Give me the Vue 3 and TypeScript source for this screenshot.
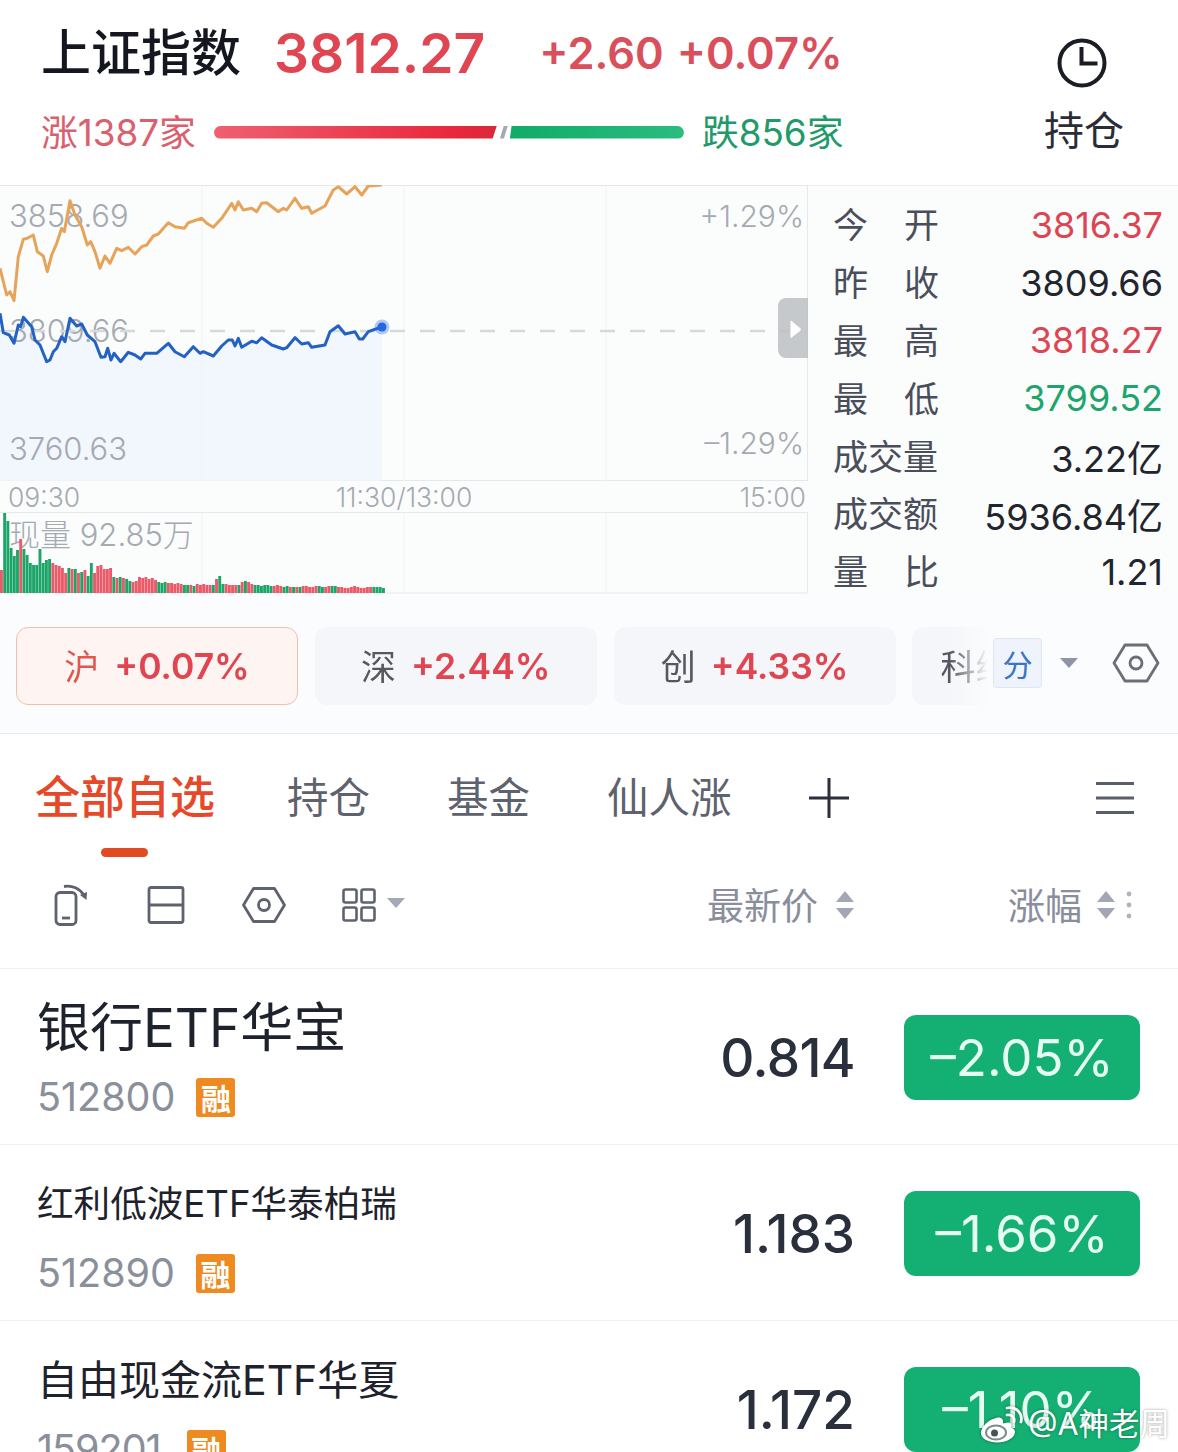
<script setup lang="ts">
const toPts = (raw: number[][]) =>
  raw.map(([x, y]) => `${(x / 3).toFixed(1)},${(y / 3 - 5).toFixed(1)}`).join(' ')

const orangeRaw = [[0,265],[20,345],[30,335],[42,362],[55,230],[70,178],[82,175],[100,165],[112,215],[130,228],[142,275],[155,225],[170,190],[185,145],[193,155],[210,62],[225,105],[245,140],[262,195],[272,185],[285,215],[300,265],[315,228],[330,250],[350,205],[365,212],[385,202],[405,222],[425,200],[440,195],[460,168],[475,162],[505,128],[525,140],[553,145],[565,128],[605,115],[620,130],[640,142],[665,115],[695,70],[705,90],[715,65],[730,90],[755,85],[770,95],[785,70],[800,68],[835,95],[850,85],[860,90],[885,55],[905,85],[925,80],[935,100],[975,78],[1000,30],[1015,20],[1040,42],[1065,20],[1085,45],[1105,18],[1145,15]]
const blueRaw = [[0,400],[10,458],[28,465],[42,490],[55,435],[62,440],[70,412],[95,440],[105,480],[120,495],[140,545],[150,540],[160,515],[170,505],[185,470],[195,485],[210,415],[230,438],[245,432],[262,465],[285,485],[303,532],[315,530],[323,505],[333,540],[342,520],[362,545],[385,517],[405,525],[422,537],[435,520],[470,520],[505,490],[525,515],[553,530],[580,500],[600,520],[610,515],[640,528],[665,498],[685,480],[697,480],[705,498],[715,475],[725,502],[755,484],[770,488],[785,473],[815,495],[850,507],[860,503],[885,473],[905,492],[925,488],[935,502],[975,495],[990,455],[1015,437],[1035,462],[1065,455],[1078,477],[1088,477],[1105,455],[1145,441]]

const orange = toPts(orangeRaw)
const blue = toPts(blueRaw)
const blueArea = toPts([...blueRaw, [1145, 902], [0, 902]])

const volHeights = [23,80,72,45,37,43,54,44,38,30,28,28,44,30,33,34,30,28,27,25,20,25,24,24,20,21,23,17,30,20,27,28,24,24,25,16,15,16,15,14,12,11,12,16,15,16,14,15,13,11,10,11,10,10,9,10,9,8,8,8,7,9,8,9,8,8,8,14,17,9,9,8,8,8,8,11,12,11,9,8,8,7,8,8,7,7,8,7,6,7,6,6,6,6,7,7,6,6,7,7,6,6,7,7,7,6,6,5,5,6,7,6,5,5,6,6,6,6,6,5]
const volColors = 'rgggggrgggggggggrrrrrgrgrgrggrrrrrrgrgrggrrrrrrrrgggrrrrrggrgrrrrrgrggrrrrgrgrrggggggrrrggrgrgrrrrrggrrggrrrrrrrrrrr'
const bars = volHeights.map((h, i) => ({
  x: i * 3.21,
  y: 408 - h,
  h,
  fill: volColors[i] === 'r' ? '#ea5a68' : '#1ca568',
}))

const stats = [
  { a: '今', b: '开', v: '3816.37', c: 'up' },
  { a: '昨', b: '收', v: '3809.66', c: '' },
  { a: '最', b: '高', v: '3818.27', c: 'up' },
  { a: '最', b: '低', v: '3799.52', c: 'down' },
  { a: '成交量', b: '', v: '3.22亿', c: '' },
  { a: '成交额', b: '', v: '5936.84亿', c: '' },
  { a: '量', b: '比', v: '1.21', c: '' },
]

const markets = [
  { n: '沪', p: '+0.07%', on: true },
  { n: '深', p: '+2.44%', on: false },
  { n: '创', p: '+4.33%', on: false },
  { n: '科综', p: '+1.02%', on: false },
]

const tabs = ['全部自选', '持仓', '基金', '仙人涨']

const rows = [
  { name: '银行ETF华宝', code: '512800', price: '0.814', pct: '–2.05%', cls: 'row-a' },
  { name: '红利低波ETF华泰柏瑞', code: '512890', price: '1.183', pct: '–1.66%', cls: 'row-b' },
  { name: '自由现金流ETF华夏', code: '159201', price: '1.172', pct: '–1.10%', cls: 'row-c' },
]
</script>

<template>
  <div class="page">
    <header class="head">
      <div class="head-main">
        <div class="quote">
          <span class="name">上证指数</span>
          <span class="last">3812.27</span>
          <span class="chg">+2.60</span>
          <span class="chg">+0.07%</span>
        </div>
        <div class="breadth">
          <span class="up-txt">涨1387家</span>
          <div class="bar">
            <i class="bar-red"></i>
            <i class="bar-flat"></i>
            <i class="bar-green"></i>
          </div>
          <span class="down-txt">跌856家</span>
        </div>
      </div>
      <div class="hold">
        <svg width="52" height="52" viewBox="0 0 52 52" fill="none" stroke="#1b1d26" stroke-width="4">
          <circle cx="26" cy="26" r="22.5" />
          <path d="M25.500 10v16.500h16" />
        </svg>
        <span>持仓</span>
      </div>
    </header>

    <section class="market">
      <svg class="chart" width="808" height="410" viewBox="0 0 808 410">
        <rect x="-1" y="0.5" width="808.500" height="295" fill="none" stroke="#e6e8ea" />
        <rect x="-1" y="327.500" width="808.500" height="80.500" fill="none" stroke="#e6e8ea" />
        <polygon :points="blueArea" fill="#f2f6fd" />
        <g stroke="#f0f2f3">
          <path d="M202 1v295M404 1v295M606 1v295M202 328v80M404 328v80M606 328v80" />
        </g>
        <g class="axis">
          <text x="9" y="42">3858.69</text>
          <text x="9" y="157">3809.66</text>
          <text x="9" y="275">3760.63</text>
          <text class="pct" x="804" y="42" text-anchor="end">+1.29%</text>
          <text class="pct" x="804" y="269" text-anchor="end">–1.29%</text>
          <text class="time" x="8" y="322">09:30</text>
          <text class="time" x="404" y="322" text-anchor="middle">11:30/13:00</text>
          <text class="time" x="806" y="322" text-anchor="end">15:00</text>
          <text class="vol" x="9" y="361">现量 92.85万</text>
        </g>
        <path d="M0 146H790" stroke="#d6d9dc" stroke-width="2.500" stroke-dasharray="15 15" />
        <polyline :points="orange" fill="none" stroke="#e8a35a" stroke-width="3" stroke-linejoin="round" />
        <polyline :points="blue" fill="none" stroke="#2362c4" stroke-width="3" stroke-linejoin="round" />
        <circle cx="382" cy="142" r="7.500" fill="#2468e0" opacity="0.35" />
        <circle cx="382" cy="142" r="4.500" fill="#2468e0" />
        <path d="M808 113h-22a8 8 0 0 0-8 8v44a8 8 0 0 0 8 8h22z" fill="#bcc0c3" opacity="0.85" />
        <path d="M791 136l9 7.500q1 1 0 2l-9 7z" fill="#fff" stroke="#fff" stroke-linejoin="round" />
        <rect v-for="(b, i) in bars" :key="i" :x="b.x" :y="b.y" width="2.900" :height="b.h" :fill="b.fill" />
      </svg>
      <div class="stats">
        <div v-for="(s, i) in stats" :key="i" class="stat">
          <span class="stat-label"><span>{{ s.a }}</span><span v-if="s.b">{{ s.b }}</span></span>
          <span class="stat-val" :class="s.c">{{ s.v }}</span>
        </div>
      </div>
    </section>

    <section class="indexes">
      <div class="index-scroll">
        <div v-for="m in markets" :key="m.n" class="index-card" :class="{ on: m.on }">
          <span class="index-name">{{ m.n }}</span>
          <span class="index-pct">{{ m.p }}</span>
        </div>
      </div>
      <div class="index-tools">
        <span class="fen">分</span>
        <svg width="20" height="12" viewBox="0 0 20 12"><path d="M1 1h18l-9 10z" fill="#8f93a6" /></svg>
        <svg class="hex-top" width="48" height="40" viewBox="0 0 48 40" fill="none" stroke="#6b6e78" stroke-width="2.800">
          <path d="M13 2h22l11 18-11 18H13L2 20z" stroke-linejoin="round" />
          <circle cx="24" cy="20" r="6" />
        </svg>
      </div>
    </section>

    <nav class="tabs">
      <span v-for="(t, i) in tabs" :key="t" class="tab" :class="{ active: i === 0 }">{{ t }}</span>
      <svg width="40" height="40" viewBox="0 0 40 40" stroke="#2b2f3a" stroke-width="3"><path d="M0 20h40M20 0v40" /></svg>
      <svg class="menu" width="38" height="34" viewBox="0 0 38 34" stroke="#5a5e6a" stroke-width="3"><path d="M0 2.500h38M0 17h38M0 31.500h38" /></svg>
    </nav>

    <div class="toolbar">
      <div class="tool-icons">
        <svg width="40" height="44" viewBox="0 0 40 44" fill="none" stroke="#5f636f" stroke-width="2.800">
          <rect x="6" y="9.500" width="20" height="32" rx="4" />
          <path d="M12 35h8" />
          <path d="M14 3.500c8-1.500 16 2 20 9" />
          <path d="M30 12l6.500 5 0.500-8z" fill="#5f636f" stroke="none" />
        </svg>
        <svg width="40" height="38" viewBox="0 0 40 38" fill="none" stroke="#5f636f" stroke-width="2.800">
          <rect x="3" y="1.500" width="34" height="35" rx="2" />
          <path d="M3 19h34" />
        </svg>
        <svg width="44" height="36" viewBox="0 0 44 36" fill="none" stroke="#5f636f" stroke-width="2.800">
          <path d="M11.500 1.500h21L42.500 18l-10 16.500h-21L1.500 18z" stroke-linejoin="round" />
          <circle cx="22" cy="18" r="5.500" />
        </svg>
        <div class="grid-pick">
          <svg width="34" height="34" viewBox="0 0 34 34" fill="none" stroke="#5f636f" stroke-width="2.600">
            <rect x="1.500" y="1.500" width="13" height="13" rx="2" />
            <rect x="19.500" y="1.500" width="13" height="13" rx="2" />
            <rect x="1.500" y="19.500" width="13" height="13" rx="2" />
            <rect x="19.500" y="19.500" width="13" height="13" rx="2" />
          </svg>
          <svg class="caret" width="20" height="12" viewBox="0 0 20 12"><path d="M1 1h18l-9 10z" fill="#a5a8b6" /></svg>
        </div>
      </div>
      <div class="cols">
        <div class="col">
          <span>最新价</span>
          <svg width="20" height="30" viewBox="0 0 20 30" fill="#a3a6b4"><path d="M10 1l9 11H1zM10 29L1 18h18z" /></svg>
        </div>
        <div class="col col-pct">
          <span>涨幅</span>
          <svg width="20" height="30" viewBox="0 0 20 30" fill="#a3a6b4"><path d="M10 1l9 11H1zM10 29L1 18h18z" /></svg>
          <svg class="dots" width="6" height="30" viewBox="0 0 6 30" fill="#b0b3bd"><circle cx="3" cy="4" r="2.400" /><circle cx="3" cy="15" r="2.400" /><circle cx="3" cy="26" r="2.400" /></svg>
        </div>
      </div>
    </div>

    <div v-for="r in rows" :key="r.code" class="row" :class="r.cls">
      <div class="row-left">
        <div class="row-name">{{ r.name }}</div>
        <div class="row-code">
          <span>{{ r.code }}</span>
          <i class="rong">融</i>
        </div>
      </div>
      <div class="row-price">{{ r.price }}</div>
      <div class="row-pill">{{ r.pct }}</div>
    </div>

    <div class="mark">
      <svg width="46" height="38" viewBox="0 0 44 38" fill="none">
        <path d="M16 13C8 15 1 22 1 28c0 6 8 9.500 16 9.500 10 0 18-5 18-10.500 0-3-3-4-4-4.500 1-3 0-5-3-5-2 0-4 1-5 1 1-4-2-7-7-5.500z" fill="#fff" />
        <ellipse cx="16" cy="27.500" rx="10" ry="7" fill="none" stroke="#7d8c86" stroke-width="2" />
        <circle cx="14.500" cy="28" r="3.500" fill="#48544f" />
        <path d="M27 10c4-1 8 2 7 7M27 3c9-2 16 5 14 14" stroke="#fff" stroke-width="2.800" stroke-linecap="round" />
      </svg>
      <span>@A神老周</span>
    </div>
  </div>
</template>

<style scoped>
.page {
  position: relative;
  height: 1452px;
  overflow: hidden;
  background: #fff;
  font-family: Inter, "Noto Sans CJK SC", sans-serif;
  color: #1a1e28;
}
.head {
  display: flex;
  justify-content: space-between;
  height: 185px;
  box-sizing: border-box;
  padding: 20px 54px 0 41px;
}
.quote {
  display: flex;
  align-items: center;
  height: 66px;
}
.name {
  margin-top: -8px;
  font-size: 50px;
  font-weight: 500;
  color: #14171f;
}
.last {
  margin-left: 33px;
  font-size: 55px;
  font-weight: 600;
  color: #e04552;
}
.chg {
  margin-left: 13px;
  font-size: 43.500px;
  font-weight: 600;
  color: #d9505c;
}
.last + .chg {
  margin-left: 54px;
}
.breadth {
  display: flex;
  align-items: center;
  height: 50px;
  margin-top: 21px;
  font-size: 36.800px;
}
.breadth span {
  margin-top: -4px;
}
.up-txt {
  color: #d9606c;
}
.down-txt {
  color: #1f9a68;
}
.bar {
  display: flex;
  width: 470px;
  height: 13px;
  margin: 0 18px;
}
.bar i {
  display: block;
  height: 13px;
}
.bar-red {
  width: 283px;
  border-radius: 7px 0 0 7px;
  background: linear-gradient(90deg, #ee6070, #e8283c 85%, #d9293a);
  clip-path: polygon(0 0, 100% 0, 98.500% 100%, 0 100%);
}
.bar-flat {
  width: 8px;
  margin: 0 2px 0 3px;
  background: #a4a9b3;
  clip-path: polygon(50% 0, 100% 0, 50% 100%, 0 100%);
}
.bar-green {
  flex: 1;
  border-radius: 0 7px 7px 0;
  background: linear-gradient(90deg, #10ac68, #2bbc80);
  clip-path: polygon(1% 0, 100% 0, 100% 100%, 0 100%);
}
.hold {
  display: flex;
  flex-direction: column;
  align-items: center;
  padding-top: 17px;
  font-size: 40px;
  color: #2a2d37;
}
.hold svg {
  margin-right: 4px;
}
.hold span {
  margin-top: 17px;
  line-height: 50px;
}
.market {
  display: flex;
  height: 410px;
  background: #fbfcfc;
  box-shadow: inset 0 1px #eceef0;
}
.chart {
  display: block;
  flex: none;
}
.axis text {
  font-size: 31px;
  font-weight: 300;
  fill: #a5aab2;
}
.axis .pct {
  font-size: 30px;
}
.axis .time {
  font-size: 26.500px;
}
.axis .vol {
  font-size: 31px;
}
.stats {
  flex: 1;
  padding: 11px 15px 0 25px;
  display: grid;
  grid-auto-rows: 57.800px;
}
.stat {
  display: flex;
  align-items: center;
  justify-content: space-between;
}
.stat-label {
  display: flex;
  justify-content: space-between;
  width: 106px;
  margin-top: -4px;
  font-size: 35px;
  white-space: nowrap;
  color: #4a4e5a;
}
.stat-val {
  font-size: 36px;
  color: #22252e;
}
.stat-val.up {
  color: #dd4552;
}
.stat-val.down {
  color: #1ea56c;
}
.indexes {
  display: flex;
  height: 139px;
  box-sizing: border-box;
  padding-top: 32px;
  background: #fbfcfd;
  border-bottom: 1px solid #e9ebee;
}
.index-scroll {
  display: flex;
  gap: 16.800px;
  width: 990px;
  height: 78px;
  padding-left: 16px;
  box-sizing: border-box;
  overflow: hidden;
  -webkit-mask-image: linear-gradient(90deg, #000 950px, transparent 988px);
  mask-image: linear-gradient(90deg, #000 950px, transparent 988px);
}
.index-card {
  flex: none;
  display: flex;
  align-items: center;
  justify-content: center;
  gap: 15px;
  width: 282px;
  height: 78px;
  box-sizing: border-box;
  border-radius: 12px;
  background: #f5f6f9;
  font-size: 35.500px;
}
.index-card:last-child {
  justify-content: flex-start;
  padding-left: 28px;
}
.index-card.on {
  background: #fef4f1;
  border: 1.500px solid #f3bda9;
}
.index-name {
  margin-top: -4px;
  font-size: 35px;
  color: #55585f;
}
.index-card.on .index-name {
  color: #e0574f;
}
.index-pct {
  font-weight: 600;
  color: #e04552;
}
.index-tools {
  display: flex;
  align-items: center;
  height: 72px;
  margin-left: 3px;
}
.fen {
  display: flex;
  align-items: center;
  justify-content: center;
  width: 49px;
  height: 50px;
  box-sizing: border-box;
  border: 1px solid #dde6f5;
  border-radius: 4px;
  background: #eff4fc;
  font-size: 30px;
  color: #3a74c4;
}
.index-tools svg {
  margin-left: 17px;
}
.index-tools .hex-top {
  margin-left: 33px;
}
.tabs {
  display: flex;
  align-items: center;
  gap: 77px;
  height: 124px;
  box-sizing: border-box;
  padding: 34px 44px 30px 35px;
  font-size: 41.500px;
  color: #5e626e;
}
.tab {
  position: relative;
  line-height: 60px;
}
.tab.active {
  margin-right: -5px;
  font-size: 45px;
  font-weight: 500;
  color: #e5492a;
}
.tab.active::after {
  content: "";
  position: absolute;
  left: 66px;
  top: 80px;
  width: 47px;
  height: 9px;
  border-radius: 5px;
  background: #e24a24;
}
.menu {
  margin-left: auto;
}
.toolbar {
  display: flex;
  align-items: center;
  justify-content: space-between;
  height: 110px;
  box-sizing: border-box;
  padding: 0 46px 16px 50px;
}
.tool-icons {
  display: flex;
  align-items: center;
  gap: 56px;
}
.grid-pick {
  display: flex;
  align-items: center;
  gap: 10px;
}
.caret {
  margin-top: -4px;
}
.cols {
  display: flex;
  gap: 153px;
  font-size: 37px;
  color: #8a8e9c;
}
.col {
  display: flex;
  align-items: center;
  gap: 17px;
}
.col span {
  margin-top: -2px;
}
.col-pct {
  gap: 14px;
}
.dots {
  margin-left: -4px;
}
.row {
  display: flex;
  align-items: center;
  height: 176px;
  box-sizing: border-box;
  padding: 0 38px 0 37px;
  border-top: 1px solid #f1f2f4;
}
.row-left {
  flex: 1;
  height: 100%;
  padding-top: 29px;
  box-sizing: border-box;
}
.row-name {
  height: 60px;
  line-height: 60px;
  color: #1e222c;
}
.row-a .row-name {
  font-size: 53px;
}
.row-b .row-name {
  font-size: 36.600px;
}
.row-c .row-name {
  font-size: 41px;
}
.row-code {
  display: flex;
  align-items: center;
  gap: 21px;
  height: 60px;
  margin-top: 9px;
  font-size: 39.500px;
  color: #8a8f9c;
}
.row-c .row-code {
  gap: 26px;
  letter-spacing: -1px;
}
.rong {
  display: flex;
  align-items: center;
  justify-content: center;
  width: 39px;
  height: 39px;
  border-radius: 3px;
  background: #ee8a1f;
  font-size: 30px;
  font-style: normal;
  font-weight: 700;
  letter-spacing: 0;
  color: #fff;
}
.row-price {
  margin-top: 3px;
  font-size: 53px;
  font-weight: 500;
  color: #2a2f3c;
}
.row-a .row-price {
  letter-spacing: -0.600px;
}
.row-pill {
  display: flex;
  align-items: center;
  justify-content: center;
  width: 236px;
  height: 85px;
  margin: 2px 0 0 49px;
  border-radius: 12px;
  background: #14b073;
  font-size: 51px;
  color: #e6fbf2;
}
.mark {
  position: absolute;
  left: 979px;
  top: 1404px;
  display: flex;
  align-items: center;
  gap: 3px;
  font-size: 30.500px;
  line-height: 40px;
  color: #fff;
  text-shadow: 0 0 3px rgba(0, 0, 0, 0.4);
}
.mark svg {
  filter: drop-shadow(0 0 1.500px rgba(0, 0, 0, 0.45));
}
</style>

<style>
html,
body {
  margin: 0;
  overflow: hidden;
}
</style>
